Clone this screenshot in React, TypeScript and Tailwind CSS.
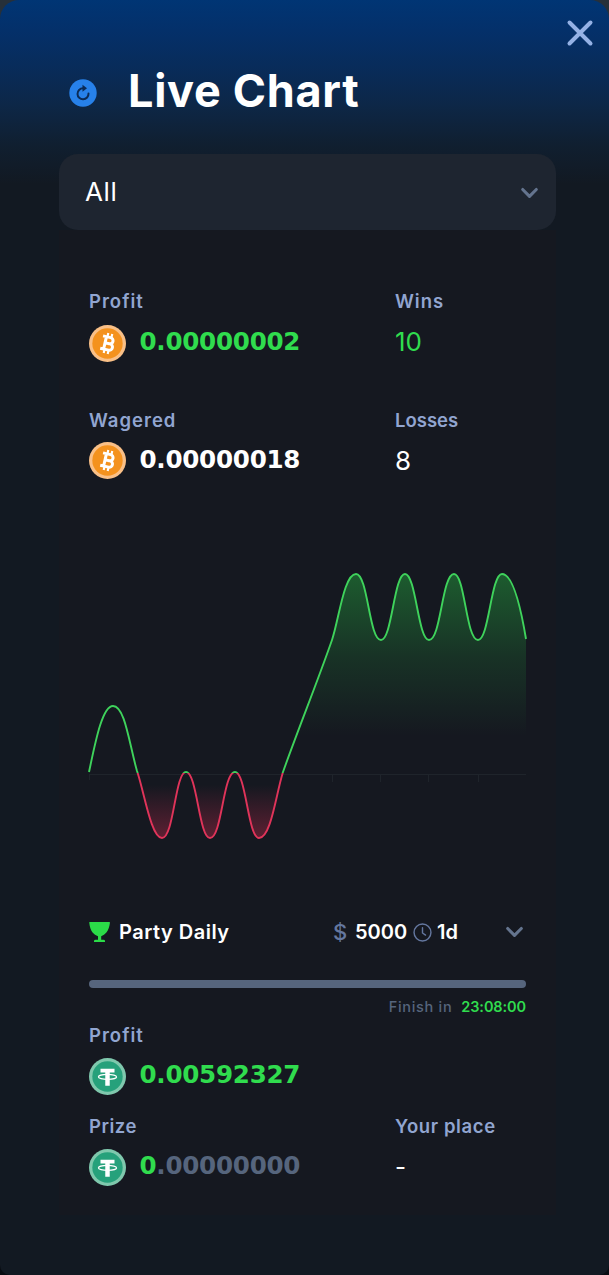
import React from "react";

const SANS = "font-[Inter,sans-serif]";
const DIGITS = "font-['DejaVu_Sans',sans-serif] font-bold";

function Chevron({ className }: { className: string }) {
  return (
    <svg viewBox="0 0 18 12" fill="none" className={className}>
      <path d="M2.2 2.5 9 9.3 15.8 2.5" stroke="#64748e" strokeWidth="3.1" strokeLinecap="round" strokeLinejoin="round" />
    </svg>
  );
}

function Bitcoin() {
  return (
    <svg viewBox="0 0 38 38" className="size-[37px] shrink-0">
      <circle cx="19" cy="19" r="19" fill="#fac087" />
      <circle cx="19" cy="19" r="15.6" fill="#f4921e" />
      <g transform="translate(19.4 19) rotate(13)" fill="none" stroke="#fff">
        <path d="M-6.6 -6.5H1.4a3.100 3.100 0 0 1 0 6.400H-2.500M-2.500 -.1H2.200a3.300 3.300 0 0 1 0 6.600H-6.600M-3 -6.500V6.500" strokeWidth="3.100" />
        <path d="M-2 -10.500V-6M2.200 -10.500V-6M-2 6V10.500M2.200 6V10.500" strokeWidth="2.200" />
      </g>
    </svg>
  );
}

function Tether() {
  return (
    <svg viewBox="0 0 38 38" className="size-[37px] shrink-0">
      <circle cx="19" cy="19" r="19" fill="#7fc8ad" />
      <circle cx="19" cy="19" r="15.6" fill="#26a17b" />
      <path d="M11.800 11H26.200V15H21.300V28.500H16.700V15H11.800Z" fill="#fff" />
      <ellipse cx="19" cy="19.400" rx="9.300" ry="2.500" fill="none" stroke="#fff" strokeWidth="1.300" />
    </svg>
  );
}

function Label({ children, className = "" }: { children: React.ReactNode; className?: string }) {
  return <div className={`whitespace-nowrap text-[18.5px] font-semibold leading-[24px] text-[#91a5d0] ${className}`}>{children}</div>;
}

function Amount({ coin, children, className = "" }: { coin: React.ReactNode; children: React.ReactNode; className?: string }) {
  return (
    <div className="flex h-[38px] items-center gap-[13.500px]">
      {coin}
      <span className={`${DIGITS} -mt-[2px] whitespace-nowrap text-[24.6px] leading-[30px] tracking-[-0.27px] ${className}`}>{children}</span>
    </div>
  );
}

const LINE =
  "M1 212C7 184 14 146 25 146C37 146 41 183 49 211C56 231 63 278 74 278C86 278 87 212 98 212C109 212 111 278 122 278C134 278 135 212 147 212C158 212 160 278 171 278C183 278 188 234 195 212C211 167 229 123 244 80C251 59 256 14 268 14C280 14 281 80 293 80C304 80 306 14 317 14C328 14 330 80 341 80C353 80 354 14 366 14C377 14 378 80 390 80C401 80 403 14 414 14C426 14 434 55 438 79";

function Chart() {
  return (
    <svg viewBox="0 0 440 292" className="-ml-px block h-[292px] w-[440px]">
      <defs>
        <linearGradient id="gain" gradientUnits="userSpaceOnUse" x1="0" y1="14" x2="0" y2="176">
          <stop offset="0" stopColor="#2bd94a" stopOpacity=".35" />
          <stop offset=".5" stopColor="#2bd94a" stopOpacity=".14" />
          <stop offset="1" stopColor="#2bd94a" stopOpacity="0" />
        </linearGradient>
        <linearGradient id="loss" gradientUnits="userSpaceOnUse" x1="0" y1="225" x2="0" y2="278">
          <stop offset="0" stopColor="#ed2e56" stopOpacity="0" />
          <stop offset="1" stopColor="#ed2e56" stopOpacity=".34" />
        </linearGradient>
        <clipPath id="above"><rect width="440" height="213" /></clipPath>
        <clipPath id="below"><rect y="213" width="440" height="79" /></clipPath>
      </defs>
      <path d="M1 214.500H438M1.500 215V220M244.500 215V222M292.500 215V222M340.500 215V222M390.500 215V222" stroke="#1f242b" />
      <g clipPath="url(#above)">
        <path d="M195 212C211 167 229 123 244 80C251 59 256 14 268 14C280 14 281 80 293 80C304 80 306 14 317 14C328 14 330 80 341 80C353 80 354 14 366 14C377 14 378 80 390 80C401 80 403 14 414 14C426 14 434 55 438 79V213Z" fill="url(#gain)" />
        <path d={LINE} fill="none" stroke="#3fd35c" strokeWidth="1.900" />
      </g>
      <g clipPath="url(#below)">
        <path d={`${LINE}V213H1Z`} fill="url(#loss)" />
        <path d={LINE} fill="none" stroke="#e0345a" strokeWidth="1.900" />
      </g>
    </svg>
  );
}

export default function App() {
  return (
    <div className={`${SANS} h-[1275px] w-full overflow-hidden bg-[linear-gradient(180deg,#26303a_50%,#080c12_50%)]`}>
      <main className="flex h-full flex-col overflow-hidden rounded-b-[10px] rounded-t-[19px] bg-[#121922] bg-[linear-gradient(180deg,#003574_0px,#04306a_30px,#082c5b_65px,#0d2747_105px,#101f30_145px,#121922_184px)] pl-[59px] pr-[53px]">
        <header className="relative flex h-[154px] shrink-0 items-start pl-[10px] pt-[64px]">
          <svg viewBox="0 0 28 28" className="mt-[15px] size-[28px]">
            <circle cx="14" cy="14" r="13.700" fill="#2781ea" />
            <path d="M14 9.300A5.500 5.500 0 1 0 19.500 14.500" fill="none" stroke="#0b2b57" strokeWidth="2" strokeLinecap="round" />
            <path d="M13.500 5.800 18 9.300 13.500 12.800Z" fill="#0b2b57" />
          </svg>
          <h1 className="ml-[31px] whitespace-nowrap text-[45px] font-bold leading-[54px] tracking-[0.7px] text-white">Live Chart</h1>
          <svg viewBox="0 0 28 28" className="absolute -right-[38px] top-[19px] size-[28px]">
            <path d="M3.500 3.500 24.500 24.500M24.500 3.500 3.500 24.500" stroke="#94b1e5" strokeWidth="4" strokeLinecap="round" />
          </svg>
        </header>

        <div className="flex h-[76px] shrink-0 items-center justify-between rounded-[19px] bg-[#1e2530] pl-[26px] pr-[17px]">
          <span className="text-[26px] leading-8 tracking-[0.6px] text-white">All</span>
          <Chevron className="mt-[2px] h-[12px] w-[19px]" />
        </div>

        <section className="h-[985px] shrink-0 bg-[#151820] px-[30px] pt-[59px]">
          <div className="grid grid-cols-[306px_1fr]">
            <div><Label className="tracking-[1px]">Profit</Label><div className="mt-[11px]"><Amount coin={<Bitcoin />} className="text-[#30dc4e]">0.00000002</Amount></div></div>
            <div><Label className="tracking-[1px]">Wins</Label><div className="mt-[12px] text-[26px] leading-[34px] text-[#30dc4e]">10</div></div>
          </div>
          <div className="mt-[46px] grid grid-cols-[306px_1fr]">
            <div><Label className="tracking-[1px]">Wagered</Label><div className="mt-[9px]"><Amount coin={<Bitcoin />} className="translate-y-px text-white">0.00000018</Amount></div></div>
            <div><Label>Losses</Label><div className="mt-[12px] text-[26px] leading-[34px] text-white">8</div></div>
          </div>
          <div className="mt-[81px]"><Chart /></div>

          <div className="mt-[64px] flex h-[32px] items-center text-[20px] font-semibold text-white">
            <svg viewBox="0 0 22 22" className="h-[22px] w-[22px]">
              <path d="M.500 1H20.500Q21 1 20.900 2C20 10 16 14 12.200 15.200V18.800H14.500Q16 18.800 16 20V21H5V20Q5 18.800 6.500 18.800H9V15.200C5 14 1 10 .300 2Q.200 1 .500 1Z" fill="#2bdb48" />
            </svg>
            <span className="ml-[8px] w-[215px] whitespace-nowrap tracking-[0.5px]">Party Daily</span>
            <span className="-ml-px w-[22px] text-[22px] font-medium text-[#64779f]">$</span>
            <span className="w-[58px] whitespace-nowrap">5000</span>
            <svg viewBox="0 0 20 20" fill="none" stroke="#64779f" strokeWidth="1.500" className="size-[19px]">
              <circle cx="10" cy="10" r="8.900" /><path d="M10 5V10.500L13.200 12.700" strokeLinecap="round" />
            </svg>
            <span className="ml-[5px] w-[68px]">1d</span>
            <Chevron className="h-[12px] w-[19px]" />
          </div>
          <div className="mt-[32px] h-[8px] rounded-full bg-[#56657d]" />
          <div className="mt-[8px] flex h-[22px] items-center justify-end gap-[9px] text-[14.500px] font-medium text-[#56657d]">
            <span className="tracking-[0.7px]">Finish in</span><span className="font-semibold tracking-[-0.1px] text-[#30dc4e]">23:08:00</span>
          </div>
          <Label className="mt-[5px] tracking-[1px]">Profit</Label>
          <div className="mt-[10px]"><Amount coin={<Tether />} className="text-[#30dc4e]">0.00592327</Amount></div>
          <div className="mt-[19px] grid grid-cols-[306px_1fr]">
            <div><Label className="tracking-[0.5px]">Prize</Label><div className="mt-[10px]"><Amount coin={<Tether />} className="text-[#56657d]"><span className="text-[#30dc4e]">0</span>.00000000</Amount></div></div>
            <div><Label className="tracking-[0.6px]">Your place</Label><div className="mt-[12px] text-[24px] leading-[34px] text-white">-</div></div>
          </div>
        </section>
      </main>
    </div>
  );
}
